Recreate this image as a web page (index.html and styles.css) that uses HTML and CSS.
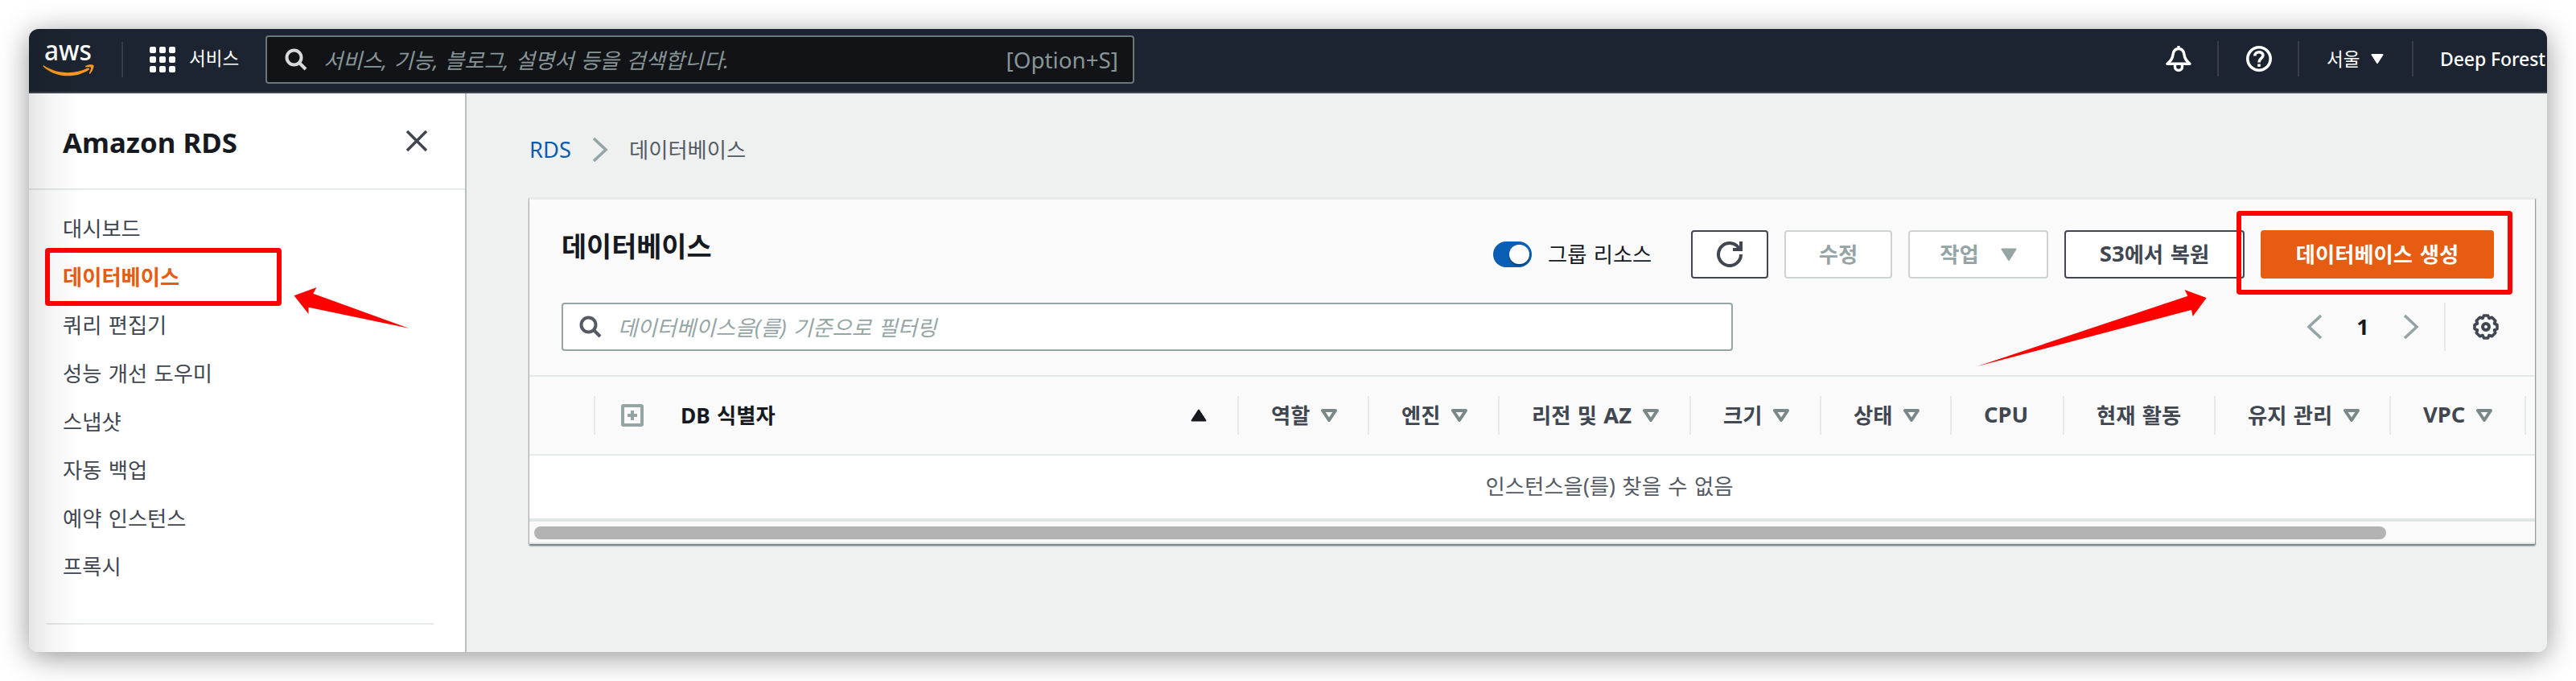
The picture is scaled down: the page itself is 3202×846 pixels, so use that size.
FILE: index.html
```html
<!DOCTYPE html>
<html lang="ko">
<head>
<meta charset="utf-8">
<title>Amazon RDS</title>
<link rel="stylesheet" href="styles.css">
</head>
<body>
<div class="window">
  <header class="topbar">
    <div class="logo"><svg width="72" height="56" viewBox="0 0 72 56"><text class="logo-text" x="2" y="28" textLength="59" lengthAdjust="spacingAndGlyphs">aws</text><path d="M1 34C17 45 39 46 56 37.500C58 37 59 38.500 57 40C42 50 17 51 0.500 35.500Z" fill="#f8991d"/><path d="M53 35C57 32.500 63 33 63.500 34.500C64 37 61.500 42 59 44.500C58 45 57.500 44.500 58 43.500C59.500 40 60.500 37.500 60 36.800C59 36 56 36.500 53.500 36.500Z" fill="#f8991d"/></svg></div>
    <i class="bar-rule"></i>
    <svg class="grid-icon" width="32" height="32" fill="#fff"><g id="r"><rect width="8" height="8" rx="2"/><rect x="12" width="8" height="8" rx="2"/><rect x="24" width="8" height="8" rx="2"/></g><use href="#r" y="12"/><use href="#r" y="24"/></svg>
    <span class="services">서비스</span>
    <div class="global-search">
      <svg width="28" height="28" viewBox="0 0 28 28" fill="none" stroke="#d5dbdb" stroke-width="4"><circle cx="11.5" cy="11.5" r="9"/><path d="M18 18L26 26"/></svg>
      <span class="global-hint">서비스, 기능, 블로그, 설명서 등을 검색합니다.</span>
      <span class="shortcut">[Option+S]</span>
    </div>
    <div class="top-right">
      <svg class="bell" width="32" height="32" viewBox="0 0 32 32" fill="none" stroke="#fff" stroke-width="3.4" stroke-linejoin="round"><path d="M16 3.500C11 3.500 9.500 7 9 11C8.500 16 6 19 2 22.300H30C26 19 23.500 16 23 11C22.500 7 21 3.500 16 3.500ZM16 0V4M11.500 23V26C11.500 31.800 20.500 31.800 20.500 26V23"/></svg>
      <i class="bar-rule"></i>
      <svg class="help" width="32" height="32" viewBox="0 0 32 32" fill="none" stroke="#fff" stroke-width="3.6"><circle cx="16" cy="16" r="14.200"/><path d="M10.800 12.500C10.800 6 21 6.500 21 11.800C21 15.500 16 15.500 16 20.500M16 22.500V26"/></svg>
      <i class="bar-rule"></i>
      <span class="region">서울</span>
      <svg class="caret" width="16" height="12"><path d="M1.500 1H14.500L8 11Z" fill="#fff" stroke="#fff" stroke-width="2" stroke-linejoin="round"/></svg>
      <i class="bar-rule"></i>
      <span class="account">Deep Forest</span>
    </div>
  </header>
  <div class="body">
    <nav class="sidebar">
      <div class="side-head"><h2>Amazon RDS</h2><svg width="28" height="28" viewBox="0 0 28 28" stroke="#414750" stroke-width="3.6"><path d="M2 2L26 26M26 2L2 26"/></svg></div>
      <ul class="menu">
        <li>대시보드</li><li class="active">데이터베이스</li><li>쿼리 편집기</li><li>성능 개선 도우미</li><li>스냅샷</li><li>자동 백업</li><li>예약 인스턴스</li><li>프록시</li>
      </ul>
      <hr class="side-rule">
    </nav>
    <main class="content">
      <div class="crumbs"><a>RDS</a><svg width="20" height="30" fill="none" stroke="#95a5a6" stroke-width="3.600"><path d="M2 1L17 15L2 29"/></svg><span>데이터베이스</span></div>
      <section class="panel">
        <div class="panel-head">
          <h1>데이터베이스</h1>
          <div class="actions">
            <span class="toggle"><i></i></span><span class="toggle-label">그룹 리소스</span>
            <button class="btn refresh"><svg width="32" height="32" viewBox="0 0 32 32" fill="none" stroke="#414750" stroke-width="4"><path d="M30 16A14 14 0 1 1 25 5.300L29 10M30 0V10H20"/></svg></button>
            <button class="btn off edit">수정</button>
            <button class="btn off work">작업<svg width="20" height="16"><path d="M1.500 1.500H18.500L10 15Z" fill="#95a5a6" stroke="#95a5a6" stroke-width="2" stroke-linejoin="round"/></svg></button>
            <button class="btn restore"><em>S3</em>에서 복원</button>
            <button class="btn create">데이터베이스 생성</button>
          </div>
        </div>
        <div class="filter-row">
          <div class="filter"><svg width="28" height="28" viewBox="0 0 28 28" fill="none" stroke="#545b64" stroke-width="4"><circle cx="11.500" cy="11.500" r="9"/><path d="M18 18L26 26"/></svg><span>데이터베이스을(를) 기준으로 필터링</span></div>
          <div class="pager">
            <svg width="20" height="30" fill="none" stroke="#95a5a6" stroke-width="3.600"><path d="M18 1L3 15L18 29"/></svg><b>1</b><svg width="20" height="30" fill="none" stroke="#95a5a6" stroke-width="3.600"><path d="M2 1L17 15L2 29"/></svg>
            <i class="pager-rule"></i>
            <svg class="gear" width="32" height="32" viewBox="0 0 32 32" fill="none" stroke="#414750"><path stroke-width="3.600" stroke-linejoin="round" d="M13.500 2H18.500L20 5.500L23.500 4.200L27.800 8.500L26.500 12L30 13.500V18.500L26.500 20L27.800 23.500L23.500 27.800L20 26.500L18.500 30H13.500L12 26.500L8.500 27.800L4.200 23.500L5.500 20L2 18.500V13.500L5.500 12L4.200 8.500L8.500 4.200L12 5.500Z"/><circle cx="16" cy="16" r="4" stroke-width="4"/></svg>
          </div>
        </div>
        <div class="thead">
          <div class="th"></div>
          <div class="th name"><svg width="28" height="28" fill="none" stroke="#95a5a6" stroke-width="4"><rect x="2" y="2" width="24" height="24" rx="1"/><path d="M8 14H20M14 8V20"/></svg><span>DB 식별자</span><svg class="up" width="20" height="16"><path d="M1.500 14.500H18.500L10 1.500Z" fill="#16191f" stroke="#16191f" stroke-width="2" stroke-linejoin="round"/></svg></div>
          <div class="th"><span>역할</span><svg class="dn"><use href="#dn"/></svg></div>
          <div class="th"><span>엔진</span><svg class="dn"><use href="#dn"/></svg></div>
          <div class="th"><span>리전 및 <em>AZ</em></span><svg class="dn"><use href="#dn"/></svg></div>
          <div class="th"><span>크기</span><svg class="dn"><use href="#dn"/></svg></div>
          <div class="th"><span>상태</span><svg class="dn"><use href="#dn"/></svg></div>
          <div class="th"><span><em>CPU</em></span></div>
          <div class="th"><span>현재 활동</span></div>
          <div class="th"><span>유지 관리</span><svg class="dn"><use href="#dn"/></svg></div>
          <div class="th"><span><em>VPC</em></span><svg class="dn"><use href="#dn"/></svg></div>
        </div>
        <div class="empty">인스턴스을(를) 찾을 수 없음</div>
        <div class="track"><div class="thumb"></div></div>
      </section>
    </main>
  </div>
</div>
<div class="edge-shade"></div>
<div class="mark mark-menu"></div>
<div class="mark mark-create"></div>
<svg class="arrows" width="3202" height="846" fill="#f00"><defs><path id="dn" d="M2 2H18L10 14Z" fill="none" stroke="#7a8889" stroke-width="4" stroke-linejoin="round"/></defs><path d="M365.500 367.300L393.500 357L389.300 364.700L508 407.700L383.500 381.700V390Z"/><path d="M2458 455L2719.400 367.700L2715.500 360L2742.700 370L2725.700 393L2724 385Z"/></svg>
</body>
</html>
```
FILE: styles.css
```css
* { box-sizing: border-box; margin: 0; padding: 0; }
html { height: 846px; overflow: hidden; }
body { width: 3202px; height: 846px; overflow: hidden; background: #fff; padding: 36px; font-family: "Noto Sans", "Noto Sans CJK KR", sans-serif; font-size: 26.3px; word-spacing: 1.5px; color: #414750; position: relative; white-space: nowrap; }
svg { display: block; flex: none; }
.window { width: 3130px; height: 774px; border-radius: 12px; overflow: hidden; display: flex; flex-direction: column; background: #eff0f0; }
body::before { content: ""; position: absolute; left: 36px; top: 36px; width: 3130px; height: 774px; border-radius: 12px; box-shadow: 0 6px 36px rgba(0,0,0,.42); z-index: -1; }
.topbar { height: 80px; background: #1b2430; border-bottom: 2px solid #414750; display: flex; align-items: center; flex: none; color: #fff; padding-left: 17px; }
.logo { width: 98px; }
.logo-text { font: 500 34px "Noto Sans", sans-serif; fill: #fff; }
.bar-rule { width: 2px; height: 44px; background: #363d47; margin-top: -2px; flex: none; }
.grid-icon { margin: -2px 0 0 33px; }
.services { font-size: 22.500px; margin: -7px 0 0 17px; width: 95px; }
.global-search { width: 1080px; height: 60px; margin-top: -2px; border: 2px solid #687778; border-radius: 4px; background: #121317; display: flex; align-items: center; padding: 0 18px 0 22px; color: #879596; }
.global-hint { font-style: italic; margin-left: 20px; flex: 1; padding-bottom: 1px; }
.shortcut { font-size: 27.8px; }
.top-right { margin-left: 1282px; display: flex; align-items: center; margin-top: -4px; }
.top-right .bar-rule { margin-top: 0; }
.bell { margin-right: 32px; }
.help { margin: 0 32px 0 34px; }
.region { font-size: 22.500px; margin-left: 34px; width: 55px; padding-bottom: 2px; }
.caret { margin-right: 35px; }
.account { font-size: 23px; margin-left: 33px; font-weight: 500; word-spacing: 0; letter-spacing: -.1px; }
.body { flex: 1; display: flex; }
.sidebar { width: 544px; background: #fff; border-right: 2px solid #b4bfc0; flex: none; }
.side-head { height: 120px; border-bottom: 2px solid #e4e9e9; display: flex; justify-content: space-between; align-items: center; padding: 0 46px 0 42px; }
.side-head h2 { font-size: 34.8px; color: #16191f; word-spacing: 0; padding-top: 2px; }
.menu { list-style: none; padding: 18px 42px 0; }
.menu li { height: 60px; line-height: 60px; }
.menu .active { color: #e65c10; font-weight: 700; }
.side-rule { border: 0; height: 2px; background: #e4e9e9; margin: 40px 39px 0 22px; }
.content { flex: 1; padding: 50px 16px 0 78px; }
.crumbs { height: 40px; display: flex; align-items: center; color: #545b64; }
.crumbs a { color: #0b5cb0; width: 78px; font-size: 27.3px; padding-bottom: 2px; }
.crumbs span { margin-left: 26px; padding-bottom: 3px; }
.panel { width: 2493px; height: 430px; margin-top: 40px; background: #fafafa; border-top: 2px solid #e7ebeb; border-bottom: 2px solid #e0e4e4; box-shadow: 0 2px 2px #65757a, 1px 1px 1px #a8b4b6, -1px 0 1px #c0caca; }
.panel-head { height: 128px; display: flex; justify-content: space-between; padding: 0 51px 0 40px; }
.panel-head h1 { font-size: 33.800px; line-height: 50px; margin-top: 33px; color: #16191f; }
.actions { display: flex; align-items: center; height: 60px; margin-top: 38px; }
.toggle { width: 48px; height: 32px; border-radius: 16px; background: #0a5fb4; padding: 4px 3px 4px 20px; }
.toggle i { display: block; width: 25px; height: 24px; border-radius: 12px; background: #fff; box-shadow: 0 2px 2px #073f78; }
.toggle-label { margin: 0 0 0 20px; width: 178px; color: #16191f; padding-bottom: 3px; }
.btn { height: 60px; border: 2px solid #414750; border-radius: 4px; background: #fff; color: #414750; font: 700 26.300px "Noto Sans", "Noto Sans CJK KR", sans-serif; word-spacing: 2px; display: flex; align-items: center; justify-content: center; margin-left: 20px; padding-bottom: 3px; white-space: pre; }
.btn em { font-style: normal; font-size: 27.5px; }
.off { border-color: #cbd3d3; color: #95a5a6; }
.refresh { width: 96px; margin-left: 0; padding-bottom: 0; }
.edit { width: 134px; }
.work { width: 174px; gap: 27px; }
.work svg { margin-top: 3px; }
.restore { width: 224px; }
.create { width: 290px; background: #e65c10; border-color: #e65c10; color: #fff; }
.filter-row { display: flex; height: 92px; align-items: flex-start; padding: 0 45px 0 40px; justify-content: space-between; border-bottom: 2px solid #e4e9e9; }
.filter { width: 1456px; height: 60px; background: #fff; border: 2px solid #95a5a6; border-radius: 4px; display: flex; align-items: center; padding-left: 20px; color: #95a5a6; font-style: italic; }
.filter span { margin-left: 20px; padding-bottom: 2px; font-size: 26.4px; }
.pager { display: flex; align-items: center; height: 60px; }
.pager b { width: 100px; text-align: center; font-size: 27px; color: #16191f; padding-bottom: 1px; }
.pager-rule { width: 2px; height: 60px; background: #e4e9e9; margin: 0 34px 0 31px; }
.thead { height: 98px; border-bottom: 2px solid #e4e9e9; display: grid; align-items: center; grid-template-columns: 82px 800px 162px 162px 238px 162px 162px 140px 188px 218px 168px; font-weight: 700; }
.th { height: 48px; display: flex; align-items: center; border-right: 2px solid #e4e9e9; padding-left: 40px; white-space: pre; }
.th span { padding-bottom: 3px; }
.th em { font-style: normal; font-size: 27.3px; }
.th.name { padding-left: 32px; color: #16191f; }
.th.name span { margin-left: 46px; }
.up { margin: 0 38px 0 auto; }
.dn { width: 20px; height: 16px; margin-left: 14px; }
.empty { height: 78px; background: #fff; line-height: 76px; text-align: center; color: #545b64; padding-left: 192px; font-size: 26.4px; }
.track { height: 30px; border-top: 4px solid #e3e6e6; padding: 6px 0 0 6px; }
.thumb { width: 2302px; height: 16px; border-radius: 8px; background: #b3b3b3; }
.edge-shade { position: absolute; left: 36px; top: 36px; width: 64px; height: 774px; border-radius: 12px 0 0 12px; background: linear-gradient(90deg, rgba(0,0,0,.1), rgba(0,0,0,.04) 45%, transparent); }
.mark { position: absolute; border: 6px solid #f00; border-radius: 4px; }
.mark-menu { left: 56px; top: 308px; width: 294px; height: 72px; }
.mark-create { left: 2780px; top: 262px; width: 343px; height: 104px; }
.arrows { position: absolute; left: 0; top: 0; }
```
